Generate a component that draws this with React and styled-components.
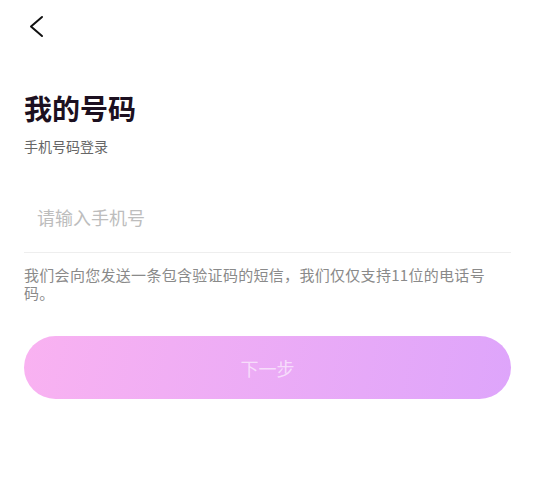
import React, { useState } from 'react';
import styled, { createGlobalStyle } from 'styled-components';

const GlobalStyle = createGlobalStyle`
  html, body {
    margin: 0;
    padding: 0;
    background: #fff;
  }
  body {
    font-family: "Noto Sans CJK SC", "Noto Sans", sans-serif;
  }
`;

const Page = styled.div`
  width: 535px;
  min-height: 484px;
  box-sizing: border-box;
  padding: 0 24px;
  display: flex;
  flex-direction: column;
`;

const TopBar = styled.div`
  height: 52px;
  display: flex;
  align-items: center;
`;

const BackButton = styled.button`
  display: flex;
  align-items: center;
  justify-content: center;
  padding: 0;
  margin-left: 2px;
  border: none;
  background: transparent;
  cursor: pointer;
  color: #111;
`;

const Title = styled.h1`
  margin: 40px 0 0;
  font-size: 28px;
  line-height: 32px;
  font-weight: 700;
  color: #1c1020;
`;

const Subtitle = styled.p`
  margin: 12px 0 0;
  font-size: 14px;
  line-height: 20px;
  color: #666;
`;

const InputRow = styled.div`
  margin-top: 34px;
  border-bottom: 1px solid #eee;
`;

const PhoneInput = styled.input`
  width: 100%;
  box-sizing: border-box;
  height: 62px;
  padding: 0 0 8px 13px;
  border: none;
  outline: none;
  font-family: inherit;
  font-size: 18px;
  color: #222;
  background: transparent;

  &::placeholder {
    color: #bdbdbd;
  }
`;

const Hint = styled.p`
  max-width: 462px;
  margin: 13px 0 0;
  font-size: 15px;
  line-height: 18px;
  letter-spacing: 0.3px;
  color: #8a8a8a;
`;

const NextButton = styled.button`
  margin-top: 34px;
  height: 63px;
  border: none;
  border-radius: 32px;
  background: linear-gradient(100deg, #f9b2f1 0%, #dea5fb 100%);
  color: rgba(255, 255, 255, 0.6);
  font-family: inherit;
  font-size: 18px;
  cursor: pointer;
`;

export default function App() {
  const [phone, setPhone] = useState('');

  return (
    <>
      <GlobalStyle />
      <Page>
        <TopBar>
          <BackButton aria-label="返回">
            <svg width="20" height="24" viewBox="0 0 20 24" fill="none">
              <polyline
                points="16,3 5,12.5 16,22"
                stroke="currentColor"
                strokeWidth="2"
                strokeLinecap="round"
                strokeLinejoin="round"
              />
            </svg>
          </BackButton>
        </TopBar>
        <Title>我的号码</Title>
        <Subtitle>手机号码登录</Subtitle>
        <InputRow>
          <PhoneInput
            type="tel"
            placeholder="请输入手机号"
            value={phone}
            onChange={(e) => setPhone(e.target.value)}
          />
        </InputRow>
        <Hint>我们会向您发送一条包含验证码的短信，我们仅仅支持11位的电话号码。</Hint>
        <NextButton disabled={phone.length !== 11}>下一步</NextButton>
      </Page>
    </>
  );
}
